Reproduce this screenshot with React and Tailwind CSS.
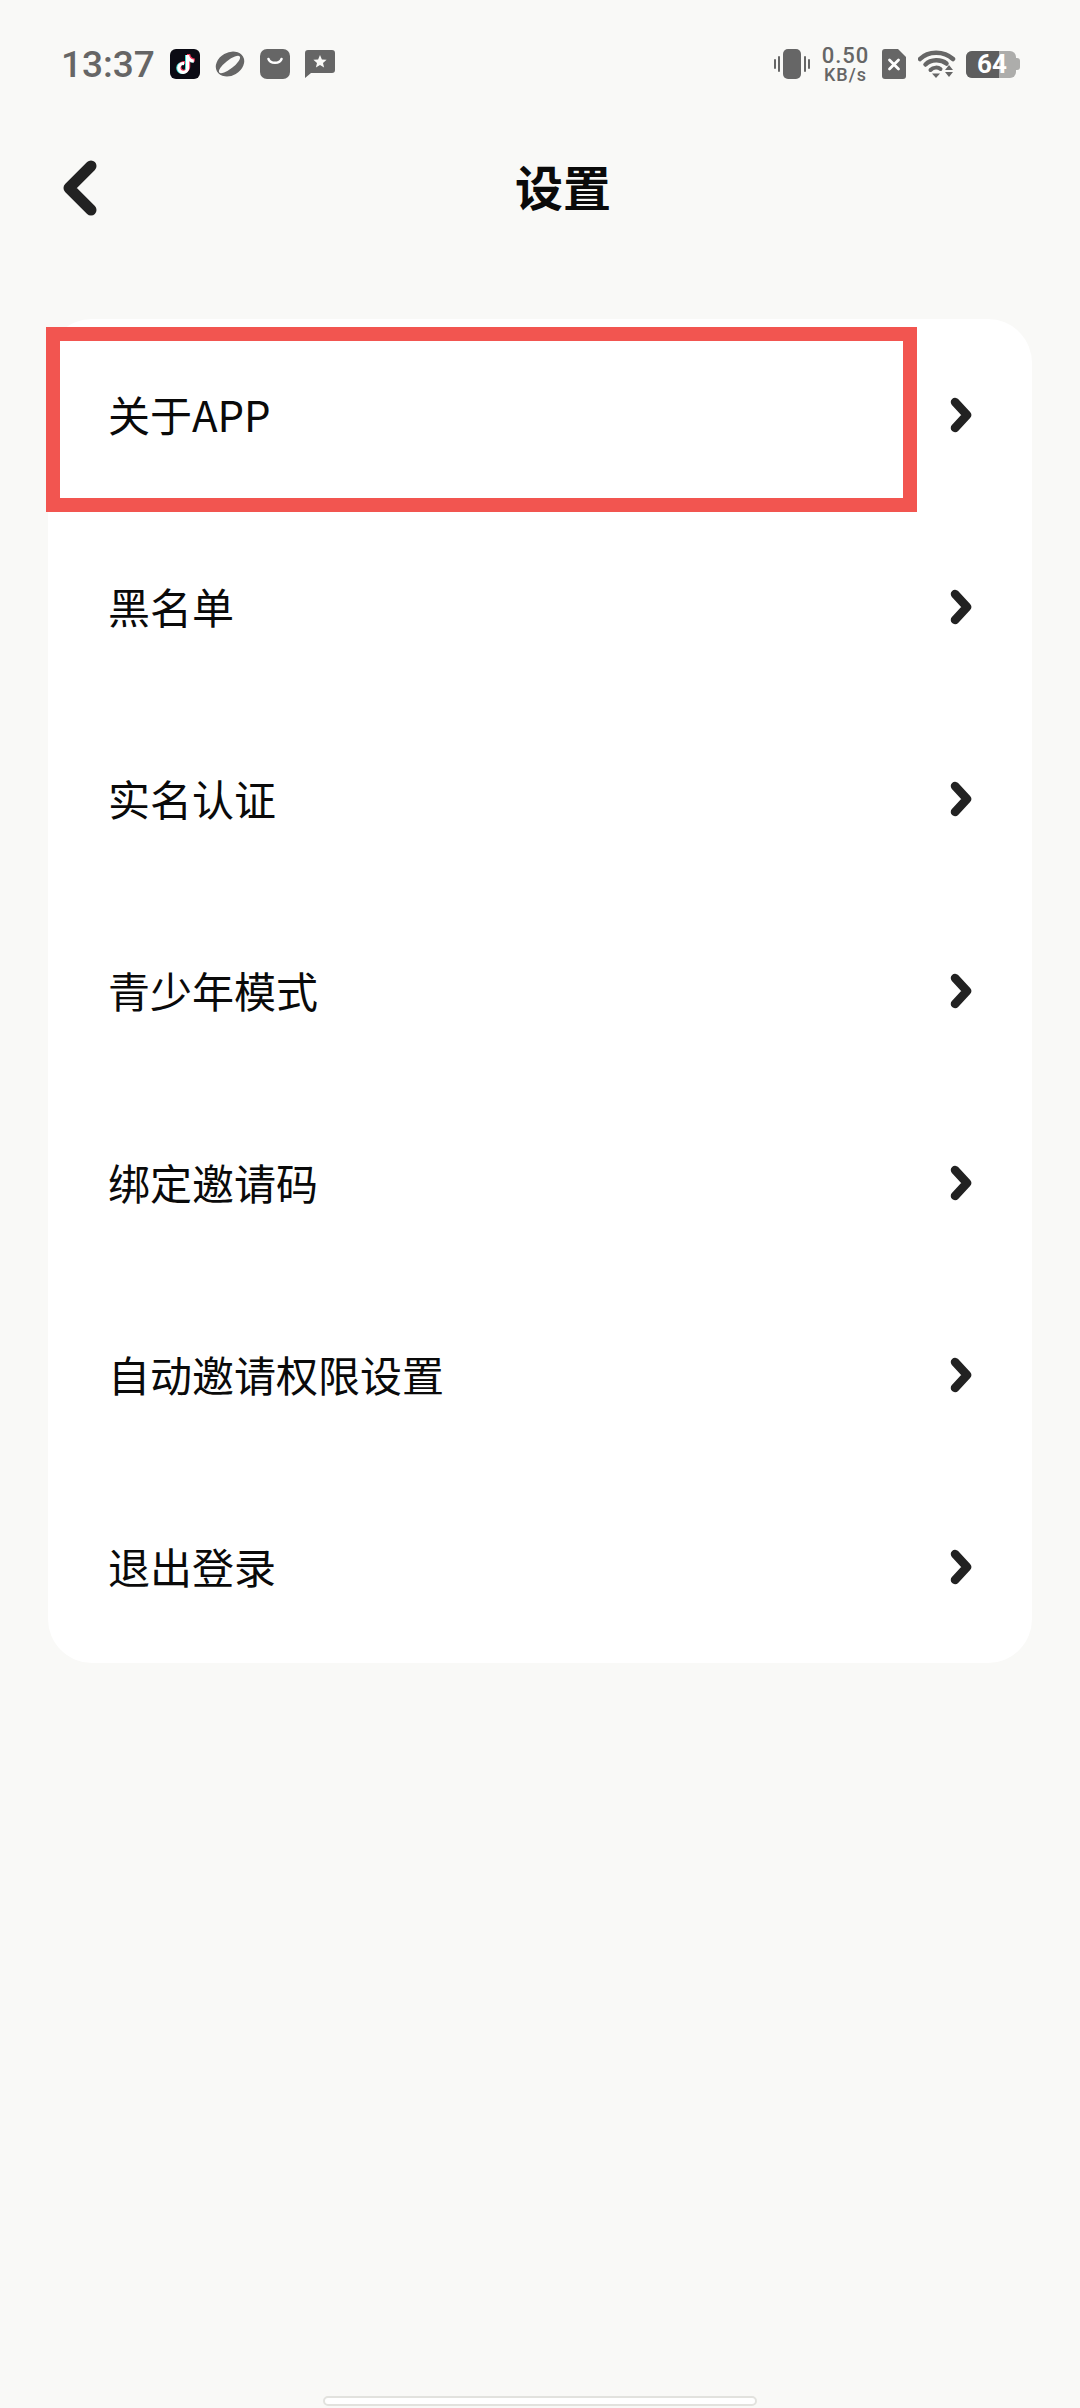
import React from 'react';
import { FaTiktok } from 'react-icons/fa6';

const items = ['关于APP', '黑名单', '实名认证', '青少年模式', '绑定邀请码', '自动邀请权限设置', '退出登录'];

const cjk = "font-['Noto_Sans_CJK_SC','Noto_Sans',sans-serif]";

const TiktokIcon = () => (
    <div className="relative w-[30px] h-[30px] rounded-[6px] bg-[#0b0b14] overflow-hidden">
        <FaTiktok className="absolute left-[5px] top-[6px] w-[19px] h-[19px] text-[#3fe0dc]" />
        <FaTiktok className="absolute left-[7px] top-[5px] w-[19px] h-[19px] text-[#f0395c]" />
        <FaTiktok className="absolute left-[6px] top-[5.5px] w-[19px] h-[19px] text-white" />
    </div>
);

const PlanetIcon = () => (
    <svg width="30" height="28" viewBox="0 0 30 28">
        <ellipse cx="15" cy="14" rx="15" ry="11.5" transform="rotate(-30 15 14)" fill="#666" />
        <ellipse cx="14.5" cy="14.5" rx="13" ry="4.2" transform="rotate(-38 14.5 14.5)" fill="#f9f9f7" />
    </svg>
);

const BagIcon = () => (
    <svg width="30" height="30" viewBox="0 0 30 30">
        <rect width="30" height="30" rx="7" fill="#666" />
        <path d="M8.5 10 C10 15 20 15 21.5 10" stroke="#fff" strokeWidth="2.6" fill="none" strokeLinecap="round" />
    </svg>
);

const StarBubbleIcon = () => (
    <svg width="30" height="28" viewBox="0 0 30 28">
        <path d="M3 0 H27 A3 3 0 0 1 30 3 V20 A3 3 0 0 1 27 23 H6 L0 28 V3 A3 3 0 0 1 3 0 Z" fill="#666" />
        <path d="M15 5 L16.9 9.4 L21.6 9.8 L18 12.9 L19.1 17.5 L15 15.1 L10.9 17.5 L12 12.9 L8.4 9.8 L13.1 9.4 Z" fill="#f9f9f7" />
    </svg>
);

const VibrateIcon = () => (
    <svg width="36" height="30" viewBox="0 0 36 30">
        <rect x="9" y="0" width="18" height="30" rx="5" fill="#666" />
        <path d="M1 11 V19 M5 8 V22 M31 8 V22 M35 11 V19" stroke="#666" strokeWidth="2" strokeLinecap="round" />
    </svg>
);

const SimIcon = () => (
    <svg width="24" height="30" viewBox="0 0 24 30">
        <path d="M3 0 H16 L24 8 V27 A3 3 0 0 1 21 30 H3 A3 3 0 0 1 0 27 V3 A3 3 0 0 1 3 0 Z" fill="#666" />
        <path d="M7.5 11 L16.5 20 M16.5 11 L7.5 20" stroke="#fff" strokeWidth="2.8" strokeLinecap="round" />
    </svg>
);

const WifiIcon = () => (
    <svg width="38" height="28" viewBox="0 0 38 28">
        <path d="M2 9 C10 0.5 26 0.5 35 9" stroke="#666" strokeWidth="4.5" fill="none" strokeLinecap="round" />
        <path d="M7.5 14.5 C13 9 23 9 28.5 13.5" stroke="#666" strokeWidth="4.5" fill="none" strokeLinecap="round" />
        <path d="M12.5 20 C15.5 17 20 17 22.5 19" stroke="#666" strokeWidth="4" fill="none" strokeLinecap="round" />
        <path d="M14 23.5 H22 L18 28 Z" fill="#666" />
        <path d="M31 15 L35 20 H27 Z M27 22 H35 L31 27 Z" fill="#666" />
    </svg>
);

const Battery = () => (
    <div className="flex items-center">
        <div className="relative w-[50px] h-[27px] rounded-[6px] bg-[#adadab]">
            <div className="absolute left-0 top-0 h-full w-[33px] rounded-l-[6px] bg-[#5e5e5e]" />
            <span className="absolute inset-0 flex items-center justify-center pl-[2px] text-white text-[26px] leading-none font-bold font-['Roboto',sans-serif]">64</span>
        </div>
        <div className="w-[4px] h-[12px] rounded-r-[3px] bg-[#adadab]" />
    </div>
);

const StatusBar = () => (
    <div className="h-[128px] flex items-center justify-between pl-[61px] pr-[60px]">
        <div className="flex items-center">
            <span className="w-[109px] text-[37px] leading-none font-medium text-[#666] font-['Roboto',sans-serif]">13:37</span>
            <div className="flex items-center gap-[15px]">
                <TiktokIcon />
                <PlanetIcon />
                <BagIcon />
                <StarBubbleIcon />
            </div>
        </div>
        <div className="flex items-center">
            <VibrateIcon />
            <div className="ml-[11px] w-[49px] flex flex-col items-center text-[#666] font-['Roboto',sans-serif] font-medium leading-none">
                <span className="text-[22px] tracking-[1px]">0.50</span>
                <span className="text-[18px] tracking-[1px] -mt-[1px]">KB/s</span>
            </div>
            <div className="ml-[12px]"><SimIcon /></div>
            <div className="ml-[12px]"><WifiIcon /></div>
            <div className="ml-[10px]"><Battery /></div>
        </div>
    </div>
);

const App = () => (
    <div className={`relative w-[1080px] h-[2408px] flex flex-col bg-[#f9f9f7] overflow-hidden ${cjk}`}>
        <StatusBar />

        <div className="h-[120px] flex items-center pl-[62px]">
            <svg width="36" height="56" viewBox="0 0 36 56" className="shrink-0">
                <path d="M29 6 L7 28 L29 50" stroke="#222" strokeWidth="11" fill="none" strokeLinecap="round" strokeLinejoin="round" />
            </svg>
            <h1 className="ml-[417px] -mt-[6px] text-[48px] leading-none font-bold text-[#0a0a0a]">设置</h1>
        </div>

        <div className="relative mt-[71px] mx-[48px] rounded-[44px] bg-white">
            {items.map(label => (
                <div key={label} className="h-[192px] flex items-center justify-between pl-[60px] pr-[60px]">
                    <span className="-mt-[2px] text-[42px] leading-none text-[#0a0a0a]">{label}</span>
                    <svg width="22" height="36" viewBox="0 0 22 36">
                        <path d="M5 5 L17 18 L5 31" stroke="#222" strokeWidth="8.5" fill="none" strokeLinecap="round" strokeLinejoin="round" />
                    </svg>
                </div>
            ))}
            {/* red highlight sitting on top of the first row */}
            <div className="absolute left-[-2px] top-[8px] w-[871px] h-[185px] border-[14px] border-[#f25550]" />
        </div>

        <div className="mt-auto mb-[2px] mx-auto w-[434px] h-[10px] rounded-full bg-white border-2 border-[#e2e2de]" />
    </div>
);

export default App;
